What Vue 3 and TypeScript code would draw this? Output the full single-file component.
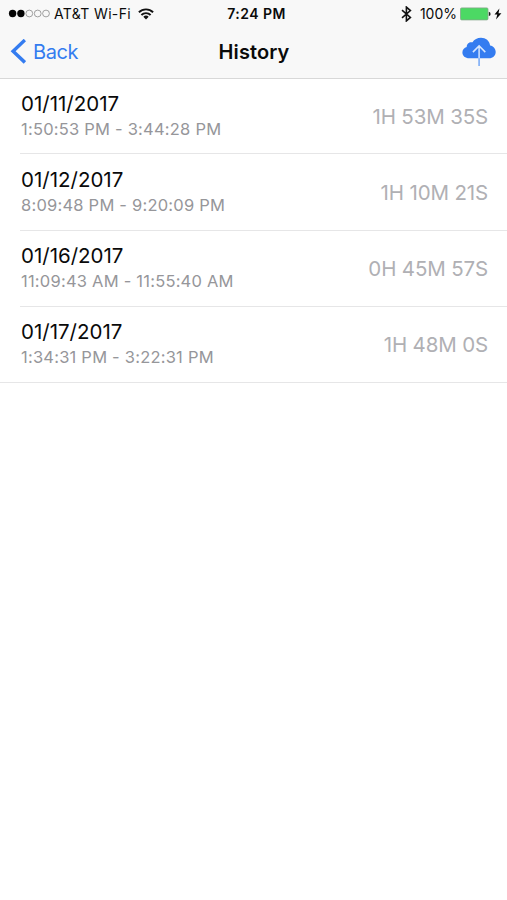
<script setup lang="ts">
interface Session {
  date: string
  range: string
  duration: string
}

const sessions: Session[] = [
  { date: '01/11/2017', range: '1:50:53 PM - 3:44:28 PM', duration: '1H 53M 35S' },
  { date: '01/12/2017', range: '8:09:48 PM - 9:20:09 PM', duration: '1H 10M 21S' },
  { date: '01/16/2017', range: '11:09:43 AM - 11:55:40 AM', duration: '0H 45M 57S' },
  { date: '01/17/2017', range: '1:34:31 PM - 3:22:31 PM', duration: '1H 48M 0S' },
]
</script>

<template>
  <div class="screen">
    <header class="top">
      <div class="status">
        <div class="side">
          <svg class="signal" width="42" height="9" viewBox="0 0 42 9">
            <circle cx="4.6" cy="4.5" r="3.7" fill="#050505" />
            <circle cx="12.9" cy="4.5" r="3.7" fill="#050505" />
            <g fill="none" stroke="#8a8a8a" stroke-width=".8">
              <circle cx="21.3" cy="4.5" r="3.4" />
              <circle cx="29.7" cy="4.5" r="3.4" />
              <circle cx="38" cy="4.5" r="3.4" />
            </g>
          </svg>
          <span class="carrier">AT&amp;T Wi-Fi</span>
          <svg class="wifi" width="16" height="12" viewBox="0 0 16 12">
            <g fill="none" stroke="#111" stroke-width="1.9">
              <path d="M.9 4.3a10.2 10.2 0 0 1 14.2 0" />
              <path d="M3.4 7a6.5 6.5 0 0 1 9.2 0" />
            </g>
            <path d="M5.3 8.8a3.9 3.9 0 0 1 5.4 0L8 11.5z" fill="#111" />
          </svg>
        </div>
        <span class="clock">7:24 PM</span>
        <div class="side right">
          <svg class="bluetooth" width="11" height="16" viewBox="0 0 11 16">
            <path d="M1 4.2l8.4 7.2-4 3.5V1.1l4 3.5L1 11.8" fill="none" stroke="#111" stroke-width="1.6" />
          </svg>
          <span class="percent">100%</span>
          <svg class="battery" width="31" height="14" viewBox="0 0 31 14">
            <rect x=".5" y=".9" width="27.5" height="12" rx="1.2" fill="#4cd964" stroke="#83a889" stroke-width=".8" />
            <path d="M28.8 4.7q1.8.3 1.8 2.2t-1.8 2.2z" fill="#222" />
          </svg>
          <svg class="bolt" width="8" height="12" viewBox="0 0 8 12">
            <path d="M5.4.5L.5 6.6h2.8L2 11.5l5.4-6.3H4.5z" fill="#080808" />
          </svg>
        </div>
      </div>
      <nav class="nav">
        <a class="back">
          <svg width="16" height="26" viewBox="0 0 16 26">
            <path d="M14.9 1L3.1 12.2l11.8 11.2" fill="none" stroke="#347cf0" stroke-width="3.4" />
          </svg>
          <span>Back</span>
        </a>
        <h1>History</h1>
        <a class="upload">
          <svg width="34" height="30" viewBox="0 0 34 30">
            <path d="M7.2 21.2C3.2 21.2.4 18.8.4 15.4c0-2.8 1.8-4.9 4.3-5.5C4.7 6.7 7.5 4.5 10.5 5.3 12.2 2.5 15.4.8 19 .8c4.8 0 8.5 3 9.1 7.6 3.4.7 5.6 3.2 5.6 6.5 0 3.7-2.8 6.3-6.7 6.3z" fill="#347cf0" />
            <path d="M17.1 9v12.2M10.9 15.1l6.2-6.2 6.2 6.2" fill="none" stroke="#d5e6ff" stroke-width="1.5" />
            <path d="M17.1 21.2V29" stroke="#83b1f7" stroke-width="1.7" />
          </svg>
        </a>
      </nav>
    </header>
    <ul class="list">
      <li v-for="session in sessions" :key="session.date" class="row">
        <div class="details">
          <span class="date">{{ session.date }}</span>
          <span class="range">{{ session.range }}</span>
        </div>
        <span class="duration">{{ session.duration }}</span>
      </li>
    </ul>
  </div>
</template>

<style>
body {
  background: #fff;
}
</style>

<style scoped>
.screen {
  min-height: 900px;
  background: #fff;
  font-family: Inter, "Liberation Sans", sans-serif;
  color: #0a0a0a;
}
.top {
  box-sizing: border-box;
  height: 79px;
  background: #f8f8f8;
  border-bottom: 1px solid #d8d8d8;
}
.status {
  display: grid;
  grid-template-columns: 1fr auto 1fr;
  align-items: center;
  height: 27px;
  padding: 0 5px 0 8px;
  font-size: 14px;
  line-height: 18px;
}
.side {
  display: flex;
  align-items: center;
  white-space: nowrap;
}
.right {
  justify-content: flex-end;
}
.carrier {
  margin-left: 4px;
  letter-spacing: 0.35px;
}
.wifi {
  margin-left: 7px;
}
.clock {
  padding-left: 3px;
  font-weight: 600;
  letter-spacing: 0.45px;
}
.percent {
  margin: 0 3px 0 8px;
}
.bolt {
  margin-left: 3px;
}
.nav {
  display: grid;
  grid-template-columns: 1fr auto 1fr;
  align-items: center;
  height: 50px;
  padding: 0 11px 0 10px;
}
.back {
  display: flex;
  align-items: center;
  gap: 7px;
  color: #347cf0;
  font-size: 20px;
  letter-spacing: -0.4px;
}
h1 {
  margin: 0;
  padding-left: 2px;
  font-size: 20px;
  font-weight: 600;
  letter-spacing: 0.1px;
}
.upload {
  display: flex;
  justify-content: flex-end;
}
.list {
  margin: 0;
  padding: 0;
  list-style: none;
  border-bottom: 1px solid #e6e6e7;
}
.row {
  box-sizing: border-box;
  display: flex;
  align-items: center;
  justify-content: space-between;
  height: 76px;
  margin-left: 20px;
  padding-right: 19px;
}
.row:first-child {
  height: 74px;
}
.row:nth-child(2) {
  height: 77px;
}
.row + .row {
  border-top: 1px solid #e6e6e7;
}
.details {
  display: flex;
  flex-direction: column;
  padding-left: 1px;
}
.date {
  font-size: 20.5px;
  line-height: 26px;
}
.range {
  color: #96969a;
  font-size: 16.5px;
  line-height: 25px;
  letter-spacing: 0.22px;
}
.duration {
  color: #b0b0b4;
  font-size: 20.5px;
  font-weight: 400;
  letter-spacing: -0.15px;
}
</style>
